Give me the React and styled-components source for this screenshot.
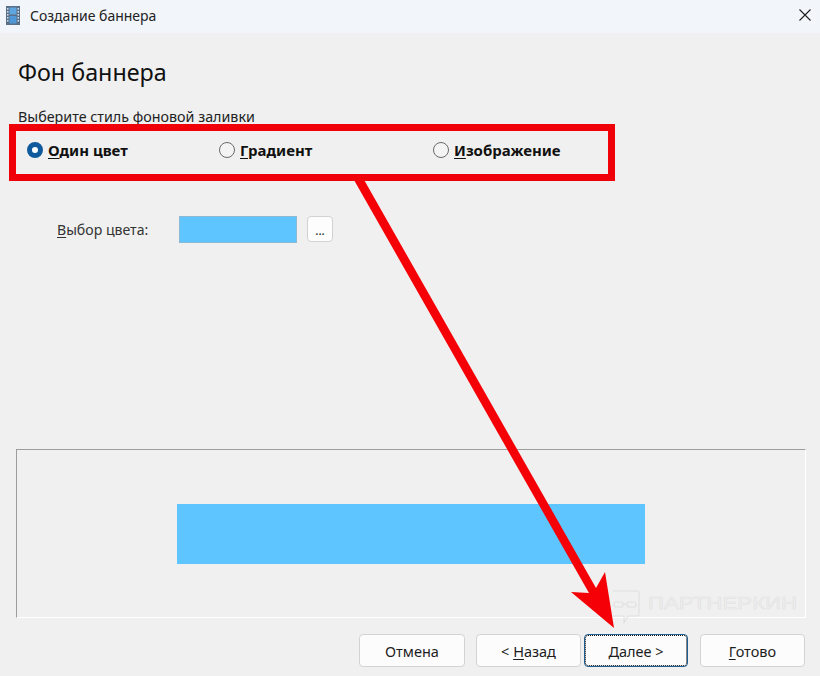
import React from 'react'
import styled, { createGlobalStyle } from 'styled-components'

const Global = createGlobalStyle`
  html, body { margin: 0; padding: 0; background: #f0f0f0; }
  * { box-sizing: border-box; }
`

const Dialog = styled.div`
  position: relative;
  width: 820px;
  height: 676px;
  overflow: hidden;
  display: flex;
  flex-direction: column;
  background: #f0f0f0;
  color: #1a1a1a;
  font-family: "Noto Sans", "Open Sans", sans-serif;
  font-size: 14px;
`

const TitleBar = styled.div`
  height: 33px;
  flex: none;
  display: flex;
  align-items: center;
  padding: 0 9px 3px 6px;
  gap: 10px;
  background: #f2f5fa;
  font-size: 14px;
  color: #222;
`

const TitleText = styled.span`
  flex: 1;
`

const Content = styled.div`
  flex: 1;
  display: flex;
  flex-direction: column;
  padding: 23px 14px 9px 16px;
`

const Heading = styled.h1`
  margin: 0 0 0 2px;
  height: 32px;
  font-size: 23.3px;
  line-height: 32px;
  font-weight: 400;
  color: #111;
`

const Hint = styled.div`
  margin: 19px 0 0 2px;
  height: 19px;
  line-height: 19px;
  font-size: 14.3px;
  color: #222;
`

const RadioRow = styled.div`
  display: flex;
  align-items: center;
  height: 24px;
  margin: 12px 0 0 11px;
`

const RadioOption = styled.label`
  display: flex;
  align-items: center;
  gap: 5px;
  width: ${p => p.$w}px;
  font-size: 15px;
  font-weight: 700;
  color: #111;
`

const RadioDot = styled.span`
  width: 16px;
  height: 16px;
  flex: none;
  border-radius: 50%;
  background: ${p => (p.$on ? '#fff' : '#f4f4f4')};
  border: ${p => (p.$on ? '5px solid #0f5a9c' : '1px solid #6a6a6a')};
`

const Key = styled.span`
  text-decoration: underline;
  text-underline-offset: 2px;
`

const ColorRow = styled.div`
  display: flex;
  align-items: center;
  height: 28px;
  margin: 53px 0 0 41px;
`

const ColorLabel = styled.span`
  width: 122px;
  font-size: 14.1px;
  color: #333;
`

const Swatch = styled.div`
  width: 118px;
  height: 27px;
  background: #5fc5fe;
  border: 1px solid #8fb9d3;
`

const DotsButton = styled.button`
  width: 26px;
  height: 26px;
  margin-left: 10px;
  padding: 0;
  background: #fdfdfd;
  border: 1px solid #d2d2d2;
  border-radius: 4px;
  font-family: inherit;
  font-size: 12px;
  line-height: 28px;
  color: #222;
`

const Preview = styled.div`
  height: 169px;
  margin-top: 206px;
  display: flex;
  align-items: center;
  justify-content: center;
  border-style: solid;
  border-width: 1px;
  border-color: #9d9d9d #fff #fff #9d9d9d;
`

const Banner = styled.div`
  width: 468px;
  height: 60px;
  background: #5fc5fe;
`

const Footer = styled.div`
  display: flex;
  justify-content: flex-end;
  align-items: center;
  margin-top: 16px;
  padding-right: 1px;
`

const Button = styled.button`
  width: ${p => p.$w || 105}px;
  height: 33px;
  margin-left: ${p => p.$gap || 0}px;
  padding: 0;
  background: #fcfcfc;
  border: 1px solid ${p => (p.$active ? '#1f5f8f' : '#d3d3d3')};
  border-radius: 4px;
  outline: ${p => (p.$active ? '1px dotted #111' : 'none')};
  outline-offset: -2px;
  font-family: inherit;
  font-size: 14.5px;
  color: #1d1d1d;
`

const RedFrame = styled.div`
  position: absolute;
  left: 9px;
  top: 124px;
  width: 606px;
  height: 57px;
  border: 7px solid #f00008;
  pointer-events: none;
`

const ArrowLayer = styled.svg`
  position: absolute;
  left: 0;
  top: 0;
  pointer-events: none;
`

const Watermark = styled.div`
  position: absolute;
  left: 610px;
  top: 590px;
  display: flex;
  align-items: center;
  gap: 8px;
  pointer-events: none;
`

const WatermarkText = styled.span`
  display: inline-block;
  margin-top: -10px;
  font-family: "Liberation Sans", sans-serif;
  font-size: 16.5px;
  transform: scaleX(1.35);
  transform-origin: left center;
  color: #f0f0f0;
  -webkit-text-stroke: 0.5px #e0e0e0;
`

function FilmIcon() {
  return (
    <svg width="14" height="19" viewBox="0 0 14 19">
      <rect x="0" y="0" width="14" height="19" fill="#5a6f86" />
      <rect x="3.5" y="1.5" width="7" height="7" fill="#5ea6e0" />
      <rect x="3.5" y="10" width="7" height="7.5" fill="#4f97d6" />
      {[2, 5, 8, 11, 14].map(y => (
        <g key={y}>
          <rect x="1" y={y} width="1.5" height="1.6" fill="#cfe0ef" />
          <rect x="11.5" y={y} width="1.5" height="1.6" fill="#cfe0ef" />
        </g>
      ))}
    </svg>
  )
}

function CloseIcon() {
  return (
    <svg width="12" height="12" viewBox="0 0 12 12">
      <path d="M0.5 0.5 L11.5 11.5 M11.5 0.5 L0.5 11.5" stroke="#1c1c1c" strokeWidth="1.1" fill="none" />
    </svg>
  )
}

function WatermarkIcon() {
  return (
    <svg width="30" height="36" viewBox="0 0 30 36" fill="none" stroke="#e0e0e0" strokeWidth="1.1">
      <path d="M3 1 H27 Q29 1 29 3 V24 Q29 26 27 26 H18 L14 33 V26 H3" />
      <rect x="4" y="12" width="9" height="5" rx="2" />
      <rect x="17" y="12" width="9" height="5" rx="2" />
      <path d="M13 14 H17" />
    </svg>
  )
}

export default function App() {
  return (
    <Dialog>
      <Global />
      <TitleBar>
        <FilmIcon />
        <TitleText>Создание баннера</TitleText>
        <CloseIcon />
      </TitleBar>
      <Content>
        <Heading>Фон баннера</Heading>
        <Hint>Выберите стиль фоновой заливки</Hint>
        <RadioRow>
          <RadioOption $w={192}><RadioDot $on /><span><Key>О</Key>дин цвет</span></RadioOption>
          <RadioOption $w={214}><RadioDot /><span><Key>Г</Key>радиент</span></RadioOption>
          <RadioOption $w={150}><RadioDot /><span><Key>И</Key>зображение</span></RadioOption>
        </RadioRow>
        <ColorRow>
          <ColorLabel><Key>В</Key>ыбор цвета:</ColorLabel>
          <Swatch />
          <DotsButton>...</DotsButton>
        </ColorRow>
        <Preview>
          <Banner />
        </Preview>
        <Footer>
          <Button $w={106}>Отмена</Button>
          <Button $gap={11}>&lt; <Key>Н</Key>азад</Button>
          <Button $gap={3} $w={104} $active><Key>Д</Key>алее &gt;</Button>
          <Button $gap={12}><Key>Г</Key>отово</Button>
        </Footer>
      </Content>
      <Watermark>
        <WatermarkIcon />
        <WatermarkText>ПАРТНЕРКИН</WatermarkText>
      </Watermark>
      <RedFrame />
      <ArrowLayer width="820" height="676" viewBox="0 0 820 676">
        <path d="M354 180 L363 178 L596 588 L605 572 L614 628 L571 592 L589 593 Z" fill="#f50006" />
      </ArrowLayer>
    </Dialog>
  )
}
